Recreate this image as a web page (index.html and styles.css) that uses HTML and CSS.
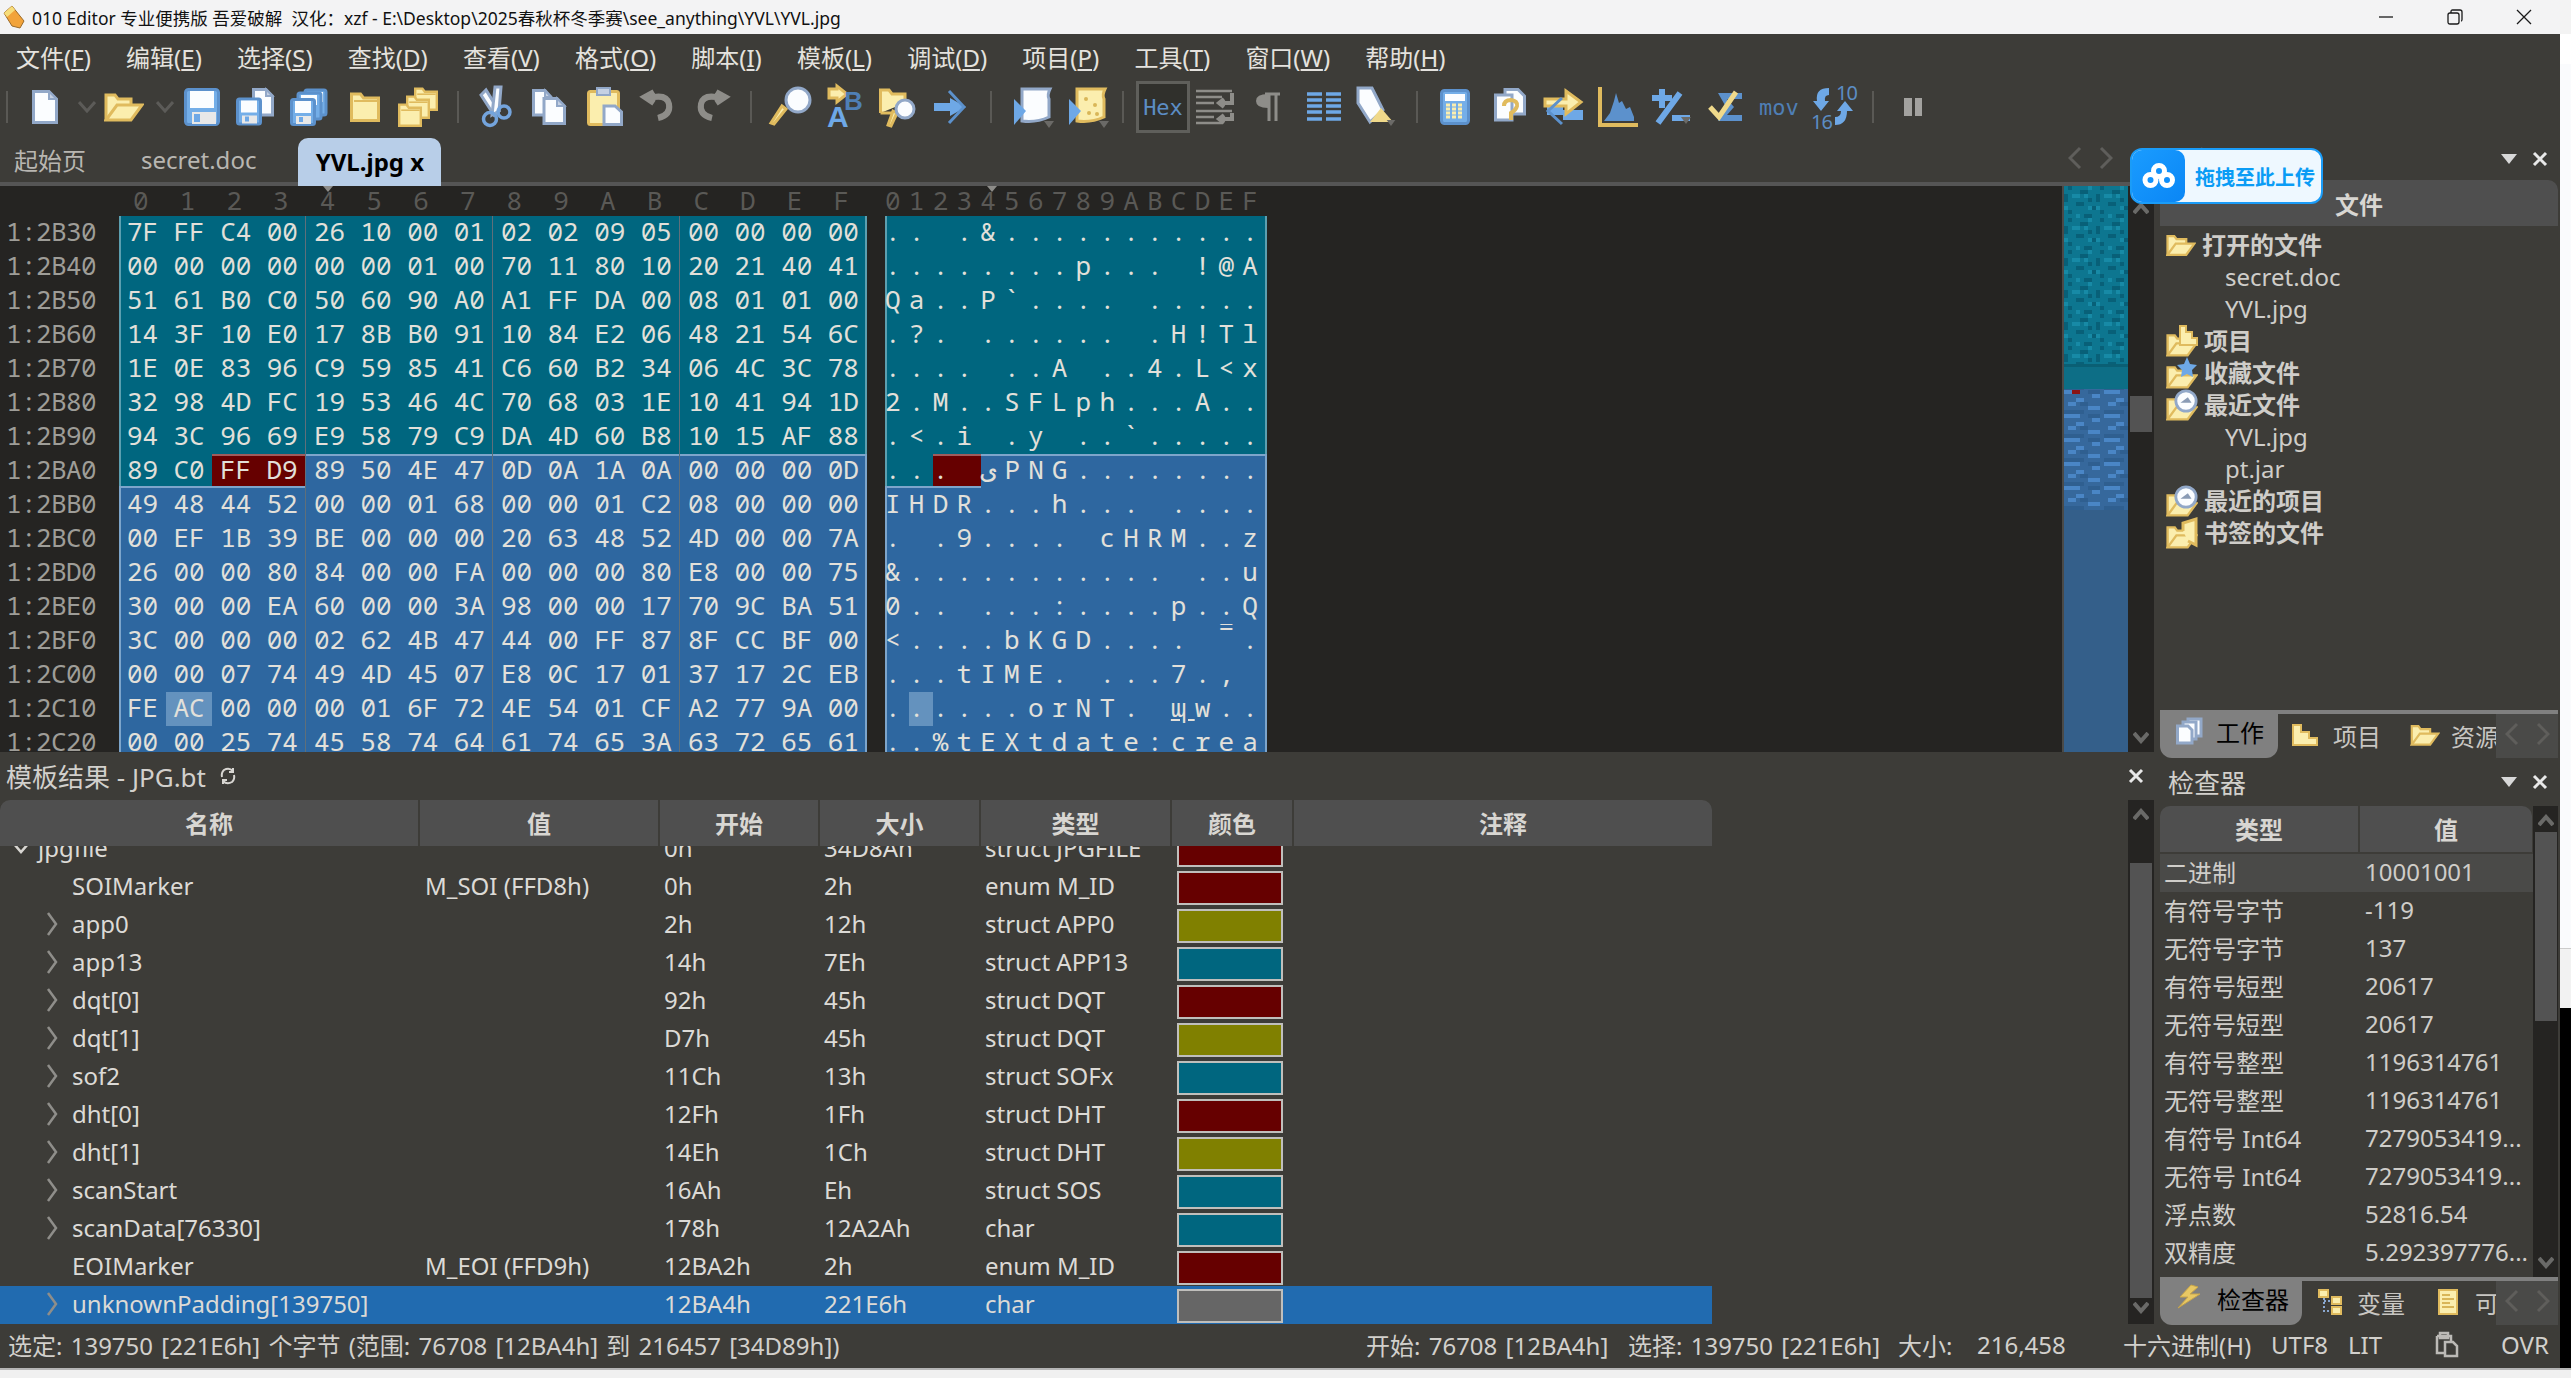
FILE: index.html
```html
<!DOCTYPE html>
<html lang="zh">
<head>
<meta charset="utf-8">
<title>010 Editor</title>
<link rel="stylesheet" href="styles.css">
</head>
<body>
<svg class="defs" aria-hidden="true">
  <symbol id="fo" viewBox="0 0 40 30"><path class="y" d="M2 28V3h9l3 4h13v6"/><path class="y" d="M2 28L13 13H38L27 28Z"/></symbol>
  <symbol id="fc" viewBox="0 0 30 30"><path class="y" d="M1.5 28.5V2h9l3 4h15v22.5Z"/><path class="yl" d="M4 9H27"/></symbol>
  <symbol id="fl" viewBox="0 0 26 28"><rect class="b" x="1.5" y="1.5" width="23" height="25" rx="2"/><rect class="wf" x="5" y="3" width="16" height="12"/><rect class="gf" x="6" y="18" width="15" height="8"/><rect class="bf" x="9" y="19" width="4" height="5"/></symbol>
  <symbol id="pg" viewBox="0 0 26 34"><path class="w" d="M1.5 1.5H17L24.5 9V32.5H1.5Z"/><path class="wd" d="M17 1.5V9H24.5Z"/></symbol>
  <symbol id="ch" viewBox="0 0 18 12"><path class="chv" d="M1 1L9 10L17 1"/></symbol>
  <symbol id="dd" viewBox="0 0 10 7"><path class="ddf" d="M0 0H10L5 7Z"/></symbol>
  <symbol id="ddw" viewBox="0 0 16 10"><path class="ddl" d="M0 0H16L8 10Z"/></symbol>
  <symbol id="clock" viewBox="0 0 26 26"><circle class="w" cx="13" cy="13" r="11"/><path class="cl" d="M7 15H19L15 9Z"/></symbol>
  <symbol id="x" viewBox="0 0 16 16"><path class="xs" d="M2 2L14 14M14 2L2 14"/></symbol>
  <symbol id="lf" viewBox="0 0 14 24"><path class="nav" d="M12 2L2 12L12 22"/></symbol>
  <symbol id="rg" viewBox="0 0 14 24"><path class="nav" d="M2 2L12 12L2 22"/></symbol>
  <symbol id="up" viewBox="0 0 16 12"><path class="scr" d="M1 11L8 3L15 11"/></symbol>
  <symbol id="dn" viewBox="0 0 16 12"><path class="scr" d="M1 1L8 9L15 1"/></symbol>
  <symbol id="ex" viewBox="0 0 12 26"><path class="arrs" d="M2 2L10 13L2 24"/></symbol>
  <pattern id="nt" width="32" height="32" patternUnits="userSpaceOnUse">
    <rect width="32" height="32" fill="#0d7690"/>
    <rect class="d1" x="4" y="0" width="4" height="4"/><rect class="d1" x="16" y="4" width="8" height="4"/><rect class="d1" x="0" y="8" width="4" height="8"/><rect class="d1" x="24" y="12" width="4" height="4"/><rect class="d1" x="12" y="16" width="8" height="4"/><rect class="d1" x="28" y="20" width="4" height="4"/><rect class="d1" x="4" y="24" width="4" height="4"/><rect class="d1" x="20" y="28" width="8" height="4"/>
    <rect class="l1" x="24" y="0" width="4" height="4"/><rect class="l1" x="8" y="8" width="8" height="4"/><rect class="l1" x="20" y="8" width="4" height="4"/><rect class="l1" x="0" y="20" width="4" height="4"/><rect class="l1" x="24" y="20" width="4" height="4"/><rect class="l1" x="12" y="28" width="4" height="4"/>
  </pattern>
  <pattern id="nb" width="40" height="24" patternUnits="userSpaceOnUse">
    <rect width="40" height="24" fill="#36689c"/>
    <rect class="l2" x="4" y="0" width="8" height="4"/><rect class="l2" x="24" y="4" width="12" height="4"/><rect class="l2" x="0" y="12" width="16" height="4"/><rect class="l2" x="28" y="16" width="8" height="4"/><rect class="l2" x="12" y="20" width="8" height="4"/>
    <rect class="d2" x="16" y="0" width="8" height="4"/><rect class="d2" x="0" y="8" width="20" height="4"/><rect class="d2" x="24" y="12" width="12" height="4"/>
  </pattern>
</svg>

<div class="top">
<div class="app">
  <header class="titlebar">
    <svg class="applogo" width="22" height="24" viewBox="0 0 22 24"><path class="lg1" d="M1 8L9 1L21 16L17 23L9 21Z"/><path class="lg2" d="M1 8L9 1L12 5L4 12Z"/></svg>
    <span class="ttl">010 Editor 专业便携版 吾爱破解&nbsp; 汉化：xzf - E:\Desktop\2025春秋杯冬季赛\see_anything\YVL\YVL.jpg</span>
    <div class="winbtns">
      <svg width="16" height="16" viewBox="0 0 16 16"><path class="wc" d="M1 8H15"/></svg>
      <svg width="16" height="16" viewBox="0 0 16 16"><path class="wc" d="M4 3.5V2.5Q4 1 5.5 1H13Q15 1 15 3V10.5Q15 12 14 12M1 6Q1 4 3 4H10Q12 4 12 6V13Q12 15 10 15H3Q1 15 1 13Z"/></svg>
      <svg width="16" height="16" viewBox="0 0 16 16"><path class="wc" d="M1 1L15 15M15 1L1 15"/></svg>
    </div>
  </header>

  <nav class="menu">
    <span>文件(<u>F</u>)</span><span>编辑(<u>E</u>)</span><span>选择(<u>S</u>)</span><span>查找(<u>D</u>)</span><span>查看(<u>V</u>)</span><span>格式(<u>O</u>)</span><span>脚本(<u>I</u>)</span><span>模板(<u>L</u>)</span><span>调试(<u>D</u>)</span><span>项目(<u>P</u>)</span><span>工具(<u>T</u>)</span><span>窗口(<u>W</u>)</span><span>帮助(<u>H</u>)</span>
  </nav>

  <div class="toolbar">
    <i class="sep"></i>
    <svg width="26" height="34"><use href="#pg"/></svg>
    <svg width="18" height="12"><use href="#ch"/></svg>
    <svg width="40" height="30"><use href="#fo"/></svg>
    <svg width="18" height="12"><use href="#ch"/></svg>
    <svg width="36" height="38" viewBox="0 0 36 38"><rect class="b" x="1.5" y="1.5" width="33" height="35" rx="3"/><rect class="wf" x="6" y="3" width="24" height="17"/><rect class="gf" x="8" y="24" width="24" height="12"/><rect class="bf" x="10" y="26" width="6" height="8"/></svg>
    <svg width="38" height="38" viewBox="0 0 38 38"><g transform="translate(16 0)"><path class="w" d="M1.5 1.5H14L20.5 8V27H1.5Z"/><path class="wd" d="M14 1.5V8H20.5Z"/></g><use href="#fl" y="9" width="26" height="29"/></svg>
    <svg width="38" height="38" viewBox="0 0 38 38"><rect class="b" x="15" y="2" width="21" height="25" rx="2"/><rect class="wf" x="18" y="4" width="15" height="10"/><rect class="b" x="8" y="5" width="23" height="26" rx="2"/><rect class="wf" x="11" y="7" width="16" height="10"/><use href="#fl" y="10" width="26" height="28"/></svg>
    <svg width="30" height="30"><use href="#fc"/></svg>
    <svg width="40" height="40" viewBox="0 0 40 40"><use href="#fc" x="16" y="0" width="24" height="24"/><use href="#fc" x="8" y="8" width="24" height="24"/><use href="#fc" x="0" y="16" width="24" height="24"/></svg>
    <i class="sep"></i>
    <svg width="32" height="40" viewBox="0 0 32 40"><path class="w" d="M1 8L6 3L19 24L14 28Z"/><path class="w" d="M15 0H21L19 24L12 28Z"/><circle class="ring" cx="10" cy="32" r="6.5"/><circle class="ring" cx="24" cy="25" r="6"/></svg>
    <svg width="34" height="36" viewBox="0 0 34 36"><path class="w" d="M1.5 1.5H13L19 8V26H1.5Z"/><path class="wd" d="M13 1.5V8H19Z"/><path class="w" d="M12 9.5H25L32.5 17V34.5H12Z"/><path class="wd" d="M25 9.5V17H32.5Z"/></svg>
    <svg width="36" height="38" viewBox="0 0 36 38"><rect class="y" x="1.5" y="3.5" width="30" height="33" rx="2"/><rect class="wd" x="10" y="0" width="13" height="7"/><path class="w" d="M17 18H28L34.5 24V36.5H17Z"/></svg>
    <svg width="36" height="32" viewBox="0 0 36 32"><path class="gs" d="M18 27Q31 24 29 13Q27 4 14 6H6M14 1L5 6L14 12"/></svg>
    <svg width="36" height="32" viewBox="0 0 36 32"><path class="gs" d="M18 27Q5 24 7 13Q9 4 22 6H30M22 1L31 6L22 12"/></svg>
    <i class="sep"></i>
    <svg width="42" height="40" viewBox="0 0 42 40"><path class="y" d="M16 22L4 37L1 36L12 19Z"/><ellipse class="w" cx="28" cy="13" rx="12" ry="12"/></svg>
    <svg width="38" height="42" viewBox="0 0 38 42"><path class="y" d="M2 3H10V0L20 8L10 16V12H2Z"/><text class="tbA2" x="17" y="24">B</text><text class="tbA" x="0" y="41">A</text></svg>
    <svg width="38" height="40" viewBox="0 0 38 40"><path class="y" d="M1.5 26V3H10L13 7H26V16"/><path class="y" d="M1.5 26H18"/><path class="y" d="M18 26L12 39L9 38L14 24Z"/><circle class="w" cx="26" cy="22" r="9"/></svg>
    <svg width="32" height="34" viewBox="0 0 32 34"><path class="bf" d="M0 13H16V8L32 17L16 26V21H0Z"/><path class="blues" d="M15 1L30 17L15 33"/></svg>
    <i class="sep"></i>
    <svg width="38" height="40" viewBox="0 0 38 40"><path class="w" d="M8 2H36Q33 8 35 12V30Q22 36 8 34Z"/><path class="bf" d="M0 12L12 24L0 38Z"/><use href="#dd" x="30" y="34" width="10" height="7"/></svg>
    <svg width="38" height="40" viewBox="0 0 38 40"><path class="y" d="M8 2H36Q33 8 35 12V30Q22 36 8 34Z"/><circle class="yd" cx="17" cy="12" r="2"/><circle class="yd" cx="26" cy="18" r="2"/><circle class="yd" cx="20" cy="26" r="2"/><circle class="yd" cx="28" cy="27" r="2"/><path class="bf" d="M0 12L12 24L0 38Z"/><use href="#dd" x="30" y="34" width="10" height="7"/></svg>
    <i class="sep"></i>
    <span class="hexbtn">Hex</span>
    <svg width="38" height="36" viewBox="0 0 38 36"><path class="gb" d="M0 2H36M0 8H26M0 14H18M0 22H36M0 28H18M0 34H26"/><path class="gs2" d="M36 4V14H24M28 10L23 14L28 18M36 24V30H24M28 26L23 30L28 34"/></svg>
    <svg width="26" height="28" viewBox="0 0 26 28"><path class="pil" d="M10 1H25M14 1V28M21 1V28"/><path class="pif" d="M13 1V15Q1 15 1 8Q1 1 13 1Z"/></svg>
    <svg width="34" height="30" viewBox="0 0 34 30"><path class="cols" d="M0 2H15M19 2H34M0 8H15M19 8H34M0 14H15M19 14H34M0 20H15M19 20H34M0 27H15M19 27H34"/></svg>
    <svg width="40" height="38" viewBox="0 0 40 38"><path class="w" d="M1 0L15 0L26 22L13 34L1 15Z"/><path class="yf" d="M24 20L36 34H13Z"/><use href="#dd" x="29" y="32" width="10" height="6"/></svg>
    <i class="sep"></i>
    <svg width="30" height="36" viewBox="0 0 30 36"><rect class="b" x="1.5" y="1.5" width="27" height="33" rx="3"/><rect class="wf" x="5" y="5" width="20" height="7"/><path class="cpad" d="M6 16H24M6 20H24M6 24H24M6 28H24" /></svg>
    <svg width="32" height="38" viewBox="0 0 32 38"><path class="w" d="M11 1.5H24L30.5 8V26H11Z"/><path class="w" d="M1.5 7H18V32H1.5Z"/><path class="qm" d="M10 18Q10 12 17 12Q24 13 23 18Q22 22 17 25V32"/></svg>
    <svg width="38" height="36" viewBox="0 0 38 36"><path class="bf" d="M38 21H18V16H2V26H18V31H38Z"/><path class="y" d="M0 10H21V2L36 13L21 25V17H0Z"/><path class="blues" d="M17 9L3 22L17 35"/></svg>
    <svg width="40" height="40" viewBox="0 0 40 40"><path class="yt" d="M2 0V38H40"/><path class="hist" d="M6 34L12 26L16 14L18 6L21 16L24 14L28 22L32 20L36 30V34Z"/></svg>
    <svg width="40" height="36" viewBox="0 0 40 36"><path class="bstroke" d="M0 9H20M10 0V19M28 4L6 34M20 29H38"/><use href="#dd" x="29" y="28" width="10" height="7"/></svg>
    <svg width="37" height="34" viewBox="0 0 37 34"><path class="blue5" d="M10 3H34V9L19 9L26 17L19 25H34V31H10L18 17Z"/><path class="check" d="M2 17L11 27L28 2"/></svg>
    <span class="movtx">mov</span>
    <div class="conv"><span class="c10">10</span><span class="c16">16</span><svg width="42" height="40" viewBox="0 0 42 40"><path class="bf" d="M16 1Q2 1 4 14H0L8 24L16 14H12Q11 8 16 8ZM22 38Q34 38 34 24H40L32 14L24 24H28Q28 30 22 30Z"/></svg></div>
    <i class="sep"></i>
    <div class="pause"><i></i><i></i></div>
  </div>

  <div class="dock">
    <div class="left">
      <div class="tabs">
        <span class="tab">起始页</span>
        <span class="tab tab2">secret.doc</span>
        <span class="tab on">YVL.jpg x</span>
        <div class="tabnav"><svg width="14" height="24"><use href="#lf"/></svg><svg width="14" height="24"><use href="#rg"/></svg></div>
      </div>
      <div class="hexpanel">
        <div class="hexmain">
          <div class="hexhead">
            <span class="hh1">0123456789ABCDEF</span><span class="hh2">0123456789ABCDEF</span>
            <i class="mk mk1"></i><i class="mk mk2"></i>
          </div>
          <div class="hl"><span class="ad">1:2B30</span><div class="hx t"><span class="g">7F FF C4 00</span><span class="g">26 10 00 01</span><span class="g">02 02 09 05</span><span class="g">00 00 00 00</span></div><div class="as t">.. .&amp;...........</div></div>
          <div class="hl"><span class="ad">1:2B40</span><div class="hx t"><span class="g">00 00 00 00</span><span class="g">00 00 01 00</span><span class="g">70 11 80 10</span><span class="g">20 21 40 41</span></div><div class="as t">........p... !@A</div></div>
          <div class="hl"><span class="ad">1:2B50</span><div class="hx t"><span class="g">51 61 B0 C0</span><span class="g">50 60 90 A0</span><span class="g">A1 FF DA 00</span><span class="g">08 01 01 00</span></div><div class="as t">Qa..P`.... .....</div></div>
          <div class="hl"><span class="ad">1:2B60</span><div class="hx t"><span class="g">14 3F 10 E0</span><span class="g">17 8B B0 91</span><span class="g">10 84 E2 06</span><span class="g">48 21 54 6C</span></div><div class="as t">.?. ...... .H!Tl</div></div>
          <div class="hl"><span class="ad">1:2B70</span><div class="hx t"><span class="g">1E 0E 83 96</span><span class="g">C9 59 85 41</span><span class="g">C6 60 B2 34</span><span class="g">06 4C 3C 78</span></div><div class="as t">.... ..A ..4.L&lt;x</div></div>
          <div class="hl"><span class="ad">1:2B80</span><div class="hx t"><span class="g">32 98 4D FC</span><span class="g">19 53 46 4C</span><span class="g">70 68 03 1E</span><span class="g">10 41 94 1D</span></div><div class="as t">2.M..SFLph...A..</div></div>
          <div class="hl"><span class="ad">1:2B90</span><div class="hx t"><span class="g">94 3C 96 69</span><span class="g">E9 58 79 C9</span><span class="g">DA 4D 60 B8</span><span class="g">10 15 AF 88</span></div><div class="as t">.&lt;.i .y ..`.....</div></div>
          <div class="hl"><span class="ad">1:2BA0</span><div class="hx b top-sel"><span class="g sp"><span class="cell t2 edge">89</span><span class="cell t2">C0</span><span class="cell r2">FF</span><span class="cell r2">D9</span></span><span class="g">89 50 4E 47</span><span class="g">0D 0A 1A 0A</span><span class="g">00 00 00 0D</span></div><div class="as b top-sel sp"><span class="ac t2 edge">.</span><span class="ac t2">.</span><span class="ac r2">.</span><span class="ac r2"> </span><span class="ac">ی</span><span class="rest">PNG........</span></div></div>
          <div class="hl"><span class="ad">1:2BB0</span><div class="hx b"><span class="g">49 48 44 52</span><span class="g">00 00 01 68</span><span class="g">00 00 01 C2</span><span class="g">08 00 00 00</span></div><div class="as b">IHDR...h... ....</div></div>
          <div class="hl"><span class="ad">1:2BC0</span><div class="hx b"><span class="g">00 EF 1B 39</span><span class="g">BE 00 00 00</span><span class="g">20 63 48 52</span><span class="g">4D 00 00 7A</span></div><div class="as b">. .9.... cHRM..z</div></div>
          <div class="hl"><span class="ad">1:2BD0</span><div class="hx b"><span class="g">26 00 00 80</span><span class="g">84 00 00 FA</span><span class="g">00 00 00 80</span><span class="g">E8 00 00 75</span></div><div class="as b">&amp;........... ..u</div></div>
          <div class="hl"><span class="ad">1:2BE0</span><div class="hx b"><span class="g">30 00 00 EA</span><span class="g">60 00 00 3A</span><span class="g">98 00 00 17</span><span class="g">70 9C BA 51</span></div><div class="as b">0.. ...:....p..Q</div></div>
          <div class="hl"><span class="ad">1:2BF0</span><div class="hx b"><span class="g">3C 00 00 00</span><span class="g">02 62 4B 47</span><span class="g">44 00 FF 87</span><span class="g">8F CC BF 00</span></div><div class="as b">&lt;....bKGD.... <span class="raise">=</span>.</div></div>
          <div class="hl"><span class="ad">1:2C00</span><div class="hx b"><span class="g">00 00 07 74</span><span class="g">49 4D 45 07</span><span class="g">E8 0C 17 01</span><span class="g">37 17 2C EB</span></div><div class="as b">...tIME. ...7., </div></div>
          <div class="hl"><span class="ad">1:2C10</span><div class="hx b"><span class="g sp"><span class="cell">FE</span><span class="cell hi">AC</span><span class="cell">00</span><span class="cell">00</span></span><span class="g">00 01 6F 72</span><span class="g">4E 54 01 CF</span><span class="g">A2 77 9A 00</span></div><div class="as b">.<span class="hi hia">.</span>....orNT. <u>ɰ</u>w..</div></div>
          <div class="hl"><span class="ad">1:2C20</span><div class="hx b"><span class="g">00 00 25 74</span><span class="g">45 58 74 64</span><span class="g">61 74 65 3A</span><span class="g">63 72 65 61</span></div><div class="as b">..%tEXtdate:crea</div></div>
        </div>
        <svg class="minimap" width="64" height="566" viewBox="0 0 64 566">
          <rect width="64" height="203" fill="url(#nt)"/>
          <rect y="178" width="64" height="3" class="mmd"/>
          <rect y="181" width="64" height="22" class="mmo"/>
          <rect y="203" width="64" height="121" fill="url(#nb)"/>
          <rect x="8" y="204" width="8" height="4" class="mmr"/>
          <rect y="324" width="64" height="242" class="mmp"/>
        </svg>
        <div class="vscroll hexscroll">
          <svg width="16" height="12"><use href="#up"/></svg>
          <i class="thumb"></i>
          <svg width="16" height="12"><use href="#dn"/></svg>
        </div>
      </div>

      <section class="tpl">
        <div class="ptitle"><span>模板结果 - JPG.bt</span><svg class="refresh" width="20" height="20" viewBox="0 0 20 20"><path class="rf" d="M15 5Q11 1 6 4Q3 7 4 11M5 15Q9 19 14 16Q17 13 16 9M15 2V6H11M5 18V14H9"/></svg><svg class="pclose" width="16" height="16"><use href="#x"/></svg></div>
        <div class="tplbody">
          <div class="table">
            <div class="thead"><span>名称</span><span>值</span><span>开始</span><span>大小</span><span>类型</span><span>颜色</span><span>注释</span></div>
            <div class="tbody">
              <div class="tr first"><span class="nm root"><svg class="dw" width="16" height="10" viewBox="0 0 16 10"><path class="dws" d="M1 1L8 9L15 1"/></svg>jpgfile</span><span></span><span>0h</span><span>34D8Ah</span><span>struct JPGFILE</span><span class="sw red"></span></div>
              <div class="tr"><span class="nm leaf">SOIMarker</span><span>M_SOI (FFD8h)</span><span>0h</span><span>2h</span><span>enum M_ID</span><span class="sw red"></span></div>
              <div class="tr"><span class="nm"><svg width="12" height="26"><use href="#ex"/></svg>app0</span><span></span><span>2h</span><span>12h</span><span>struct APP0</span><span class="sw olive"></span></div>
              <div class="tr"><span class="nm"><svg width="12" height="26"><use href="#ex"/></svg>app13</span><span></span><span>14h</span><span>7Eh</span><span>struct APP13</span><span class="sw teal"></span></div>
              <div class="tr"><span class="nm"><svg width="12" height="26"><use href="#ex"/></svg>dqt[0]</span><span></span><span>92h</span><span>45h</span><span>struct DQT</span><span class="sw red"></span></div>
              <div class="tr"><span class="nm"><svg width="12" height="26"><use href="#ex"/></svg>dqt[1]</span><span></span><span>D7h</span><span>45h</span><span>struct DQT</span><span class="sw olive"></span></div>
              <div class="tr"><span class="nm"><svg width="12" height="26"><use href="#ex"/></svg>sof2</span><span></span><span>11Ch</span><span>13h</span><span>struct SOFx</span><span class="sw teal"></span></div>
              <div class="tr"><span class="nm"><svg width="12" height="26"><use href="#ex"/></svg>dht[0]</span><span></span><span>12Fh</span><span>1Fh</span><span>struct DHT</span><span class="sw red"></span></div>
              <div class="tr"><span class="nm"><svg width="12" height="26"><use href="#ex"/></svg>dht[1]</span><span></span><span>14Eh</span><span>1Ch</span><span>struct DHT</span><span class="sw olive"></span></div>
              <div class="tr"><span class="nm"><svg width="12" height="26"><use href="#ex"/></svg>scanStart</span><span></span><span>16Ah</span><span>Eh</span><span>struct SOS</span><span class="sw teal"></span></div>
              <div class="tr"><span class="nm"><svg width="12" height="26"><use href="#ex"/></svg>scanData[76330]</span><span></span><span>178h</span><span>12A2Ah</span><span>char</span><span class="sw teal"></span></div>
              <div class="tr"><span class="nm leaf">EOIMarker</span><span>M_EOI (FFD9h)</span><span>12BA2h</span><span>2h</span><span>enum M_ID</span><span class="sw red"></span></div>
              <div class="tr sel"><span class="nm"><svg width="12" height="26"><use href="#ex"/></svg>unknownPadding[139750]</span><span></span><span>12BA4h</span><span>221E6h</span><span>char</span><span class="sw gray"></span></div>
            </div>
          </div>
          <div class="vscroll tplscroll">
            <svg width="16" height="12"><use href="#up"/></svg>
            <i class="thumb"></i>
            <svg width="16" height="12"><use href="#dn"/></svg>
          </div>
        </div>
      </section>
    </div>

    <div class="right">
      <section class="rtop">
        <div class="ptitle2"><span>工作</span><svg class="pm" width="16" height="10"><use href="#ddw"/></svg><svg width="16" height="16"><use href="#x"/></svg></div>
        <div class="filehead">文件</div>
        <div class="tree">
          <div class="node"><svg width="30" height="24"><use href="#fo"/></svg>打开的文件</div>
          <div class="kid">secret.doc</div>
          <div class="kid">YVL.jpg</div>
          <div class="node"><svg width="32" height="32" viewBox="0 0 32 32"><use href="#fo" y="8" width="32" height="24"/><path class="yb" d="M14 1H20V7H26V13H31V20H14Z"/></svg>项目</div>
          <div class="node"><svg width="32" height="32" viewBox="0 0 32 32"><use href="#fo" y="8" width="32" height="24"/><path class="star" d="M21 0L24 7L31 8L26 13L27 20L21 17L15 20L16 13L11 8L18 7Z"/></svg>收藏文件</div>
          <div class="node"><svg width="32" height="32" viewBox="0 0 32 32"><use href="#fo" y="8" width="32" height="24"/><use href="#clock" x="8" y="0" width="24" height="24"/></svg>最近文件</div>
          <div class="kid">YVL.jpg</div>
          <div class="kid">pt.jar</div>
          <div class="node"><svg width="32" height="32" viewBox="0 0 32 32"><use href="#fo" y="8" width="32" height="24"/><use href="#clock" x="8" y="0" width="24" height="24"/></svg>最近的项目</div>
          <div class="node"><svg width="32" height="32" viewBox="0 0 32 32"><use href="#fo" y="8" width="32" height="24"/><path class="y" d="M17 14V6L30 2V28L22 24"/></svg>书签的文件</div>
        </div>
        <div class="dtabs">
          <div class="dt on w1"><svg width="26" height="26" viewBox="0 0 26 26"><rect class="w" x="12" y="1" width="13" height="17"/><rect class="w" x="7" y="4" width="13" height="17"/><path class="w" d="M1.5 8H12L16 12V25H1.5Z"/></svg>工作</div>
          <div class="dt w2"><svg width="26" height="22" viewBox="0 0 26 22"><path class="yb" d="M1 1H9V8H17V14H25V21H1Z"/></svg>项目</div>
          <div class="dt w3"><svg width="30" height="22"><use href="#fo"/></svg>资源</div>
          <div class="dnav"><svg width="14" height="24"><use href="#lf"/></svg><svg width="14" height="24"><use href="#rg"/></svg></div>
        </div>
      </section>
      <section class="rbot">
        <div class="ptitle2 insp"><span>检查器</span><svg class="pm" width="16" height="10"><use href="#ddw"/></svg><svg width="16" height="16"><use href="#x"/></svg></div>
        <div class="inspbody">
          <div class="itable">
            <div class="ihead"><span>类型</span><span>值</span></div>
            <div class="ir cur"><span>二进制</span><span>10001001</span></div>
            <div class="ir"><span>有符号字节</span><span>-119</span></div>
            <div class="ir"><span>无符号字节</span><span>137</span></div>
            <div class="ir"><span>有符号短型</span><span>20617</span></div>
            <div class="ir"><span>无符号短型</span><span>20617</span></div>
            <div class="ir"><span>有符号整型</span><span>1196314761</span></div>
            <div class="ir"><span>无符号整型</span><span>1196314761</span></div>
            <div class="ir"><span>有符号 Int64</span><span>7279053419...</span></div>
            <div class="ir"><span>无符号 Int64</span><span>7279053419...</span></div>
            <div class="ir"><span>浮点数</span><span>52816.54</span></div>
            <div class="ir"><span>双精度</span><span>5.292397776...</span></div>
          </div>
          <div class="vscroll iscroll">
            <svg width="16" height="12"><use href="#up"/></svg>
            <i class="thumb"></i>
            <svg width="16" height="12"><use href="#dn"/></svg>
          </div>
        </div>
        <div class="dtabs">
          <div class="dt on w4"><svg width="26" height="28" viewBox="0 0 26 28"><path class="bolt" d="M15 1L4 13H12L2 24L24 10H14L22 3Z"/></svg>检查器</div>
          <div class="dt w5"><svg width="24" height="26" viewBox="0 0 24 26"><rect class="yb" x="1" y="1" width="9" height="7"/><rect class="yb" x="14" y="8" width="9" height="7"/><rect class="yb" x="14" y="18" width="9" height="7"/><path class="dots" d="M6 9V22H13M6 12H13"/></svg>变量</div>
          <div class="dt w6"><svg width="20" height="26" viewBox="0 0 20 26"><rect class="yb" x="1" y="1" width="18" height="24"/><path class="dots2" d="M4 6H12M4 10H16M4 14H12M4 18H16"/></svg>可</div>
          <div class="dnav"><svg width="14" height="24"><use href="#lf"/></svg><svg width="14" height="24"><use href="#rg"/></svg></div>
        </div>
      </section>
    </div>
  </div>

  <footer class="status">
    <span>选定: 139750 [221E6h] 个字节 (范围: 76708 [12BA4h] 到 216457 [34D89h])</span>
    <span>开始: 76708 [12BA4h]</span>
    <span>选择: 139750 [221E6h]</span>
    <span>大小:</span>
    <span>216,458</span>
    <span>十六进制(H)</span>
    <span>UTF8</span>
    <span>LIT</span>
    <svg width="24" height="26" viewBox="0 0 24 26"><path class="clip" d="M3 5H17V10M3 5V22H10M6 2H14V7H6ZM11 11H19L23 15V25H11Z"/></svg>
    <span>OVR</span>
  </footer>
</div>
<aside class="strip"><div class="s1"></div><div class="s2"></div><div class="s3"></div><div class="s4"></div><div class="s5"></div></aside>
</div>
<div class="bottom"></div>

<div class="baidu">
  <div class="bdlogo"><svg width="32" height="26" viewBox="0 0 32 26"><circle class="bdc" cx="16" cy="8" r="5.5"/><circle class="bdc" cx="7.5" cy="17" r="5.5"/><circle class="bdc" cx="24" cy="17" r="5.5"/></svg></div>
  <span>拖拽至此上传</span>
</div>
</body>
</html>
```
FILE: styles.css
```css
* { box-sizing: border-box; }
html, body { margin: 0; padding: 0; }
body {
  width: 2571px; height: 1378px; overflow: hidden; position: relative;
  background: #f1f1f1; color: #dcdad6;
  font-family: "Noto Sans", "Noto Sans CJK SC", sans-serif; font-size: 24px;
}
.defs { position: absolute; width: 0; height: 0; }
svg { display: block; flex: none; overflow: visible; }

/* icon paints */
.y { fill: #fbeeae; stroke: #e0bb5e; stroke-width: 3; }
.yl { fill: none; stroke: #e0bb5e; stroke-width: 2; }
.yb { fill: #fbeeae; stroke: #e0bb5e; stroke-width: 2; }
.yf { fill: #f0d98a; }
.yd { fill: #d9b658; }
.yt { fill: none; stroke: #e0bb5e; stroke-width: 4; }
.b { fill: #74aee8; stroke: #5c91cc; stroke-width: 3; }
.bf { fill: #6ea8e6; }
.wf { fill: #fbfdff; }
.gf { fill: #e8e8e8; }
.w { fill: #fbfdff; stroke: #92a8c8; stroke-width: 3; }
.wd { fill: #c5d1e3; stroke: #92a8c8; stroke-width: 2; }
.chv { fill: none; stroke: #5c5b58; stroke-width: 3; }
.ddf { fill: #6b6a67; }
.ddl { fill: #d8d8d8; }
.dws { fill: none; stroke: #d8d6d2; stroke-width: 2.5; }
.ring { fill: none; stroke: #74a4dc; stroke-width: 3.5; }
.gs { fill: none; stroke: #8e8d89; stroke-width: 6; }
.gb { fill: none; stroke: #8e8d89; stroke-width: 2.5; }
.gs2 { fill: none; stroke: #8e8d89; stroke-width: 4; }
.pil { fill: none; stroke: #8e8d89; stroke-width: 3; }
.pif { fill: #8e8d89; }
.cols { fill: none; stroke: #6ea8e6; stroke-width: 3.5; }
.cpad { fill: none; stroke: #fbeeae; stroke-width: 3; stroke-dasharray: 4 2; }
.qm { fill: none; stroke: #e0bb5e; stroke-width: 4; }
.blues { fill: none; stroke: #5c91cc; stroke-width: 3; }
.hist { fill: #5c91cc; }
.bstroke { fill: none; stroke: #6ea8e6; stroke-width: 6; }
.blue5 { fill: #5c91cc; }
.check { fill: none; stroke: #f0d98a; stroke-width: 5; }
.tbA { fill: #6ea8e6; font: bold 30px "Liberation Sans", sans-serif; }
.tbA2 { fill: #4f7fb5; font: bold 26px "Liberation Sans", sans-serif; }
.cl { fill: #8a9bb5; }
.xs { fill: none; stroke: #e8e8e8; stroke-width: 3; }
.nav { fill: none; stroke: #5f5e5b; stroke-width: 3; }
.scr { fill: none; stroke: #6a6a68; stroke-width: 4; }
.arrs { fill: none; stroke: #8f8e8a; stroke-width: 2.5; }
.star { fill: #6ea8e6; }
.bolt { fill: #e8c864; stroke: #c9a64a; stroke-width: 1; }
.dots { fill: none; stroke: #8aa8d0; stroke-width: 2; stroke-dasharray: 2 2; }
.dots2 { fill: none; stroke: #d9b658; stroke-width: 2; }
.clip { fill: none; stroke: #bcbab6; stroke-width: 2.5; }
.rf { fill: none; stroke: #d8d6d2; stroke-width: 2; }
.lg1 { fill: #f2a33a; stroke: #9a6a2a; stroke-width: 1; }
.lg2 { fill: #f7dd7a; }
.wc { fill: none; stroke: #1a1a1a; stroke-width: 1.3; }
.d1 { fill: #086078; }
.l1 { fill: #178aa6; }
.l2 { fill: #4a86c6; }
.d2 { fill: #2f5f90; }
.mmd { fill: #0a5f74; }
.mmo { fill: #0d6e86; }
.mmr { fill: #8a1414; }
.mmp { fill: #345f8a; }
.bdc { fill: none; stroke: #fff; stroke-width: 5; }

/* frame */
.top { display: flex; height: 1368px; }
.app { width: 2560px; height: 1368px; display: flex; flex-direction: column; background: #3d3c38; }
.strip { width: 11px; display: flex; flex-direction: column; }
.s1 { height: 34px; background: #f3f3f3; }
.s2 { height: 30px; background: #fff; }
.s3 { height: 884px; background: #fafbfd; }
.s4 { height: 60px; background: #f2f2f2; border-top: 1px solid #ccc; }
.s5 { flex: 1; background: #000; }
.bottom { height: 10px; background: #f0f0f0; border-top: 2px solid #b5b5b5; }

.titlebar { height: 34px; flex: none; background: #f3f3f4; color: #111; display: flex; align-items: center; padding-left: 3px; font-size: 17.5px; }
.applogo { margin-right: 7px; }
.ttl { white-space: nowrap; }
.winbtns { margin-left: auto; display: flex; gap: 53px; padding-right: 28px; }

.menu { height: 42px; flex: none; display: flex; align-items: center; gap: 35.2px; padding: 2px 0 0 16px; color: #e4e2de; white-space: nowrap; }
.toolbar {
  height: 62px; flex: none; display: grid; align-items: center; padding-left: 6px;
  grid-template-columns: 26px 46px 26px 52px 28px 52px 54px 60px 48px 59px 23px 52px 55px 53px 54px 56px 20px 57px 52px 55px 56px 24px 55px 53px 14px 60px 59px 52px 50px 59px 24px 54px 51px 53px 54px 56px 51px 54px 59px 32px 18px;
}
.sep { display: block; width: 2px; height: 32px; background: #5a5955; }
.hexbtn { width: 54px; height: 52px; display: flex; align-items: center; justify-content: center; background: #30302c; border: 3px solid #5f5f5b; color: #5c8dc4; font-size: 22px; font-family: "DejaVu Sans Mono", monospace; letter-spacing: 0; }
.movtx { color: #4f7fb5; font: 22px "DejaVu Sans Mono", monospace; }
.conv { position: relative; width: 42px; height: 40px; color: #5c8dc4; font-size: 20px; line-height: 20px; }
.c10 { position: absolute; right: -2px; top: -4px; letter-spacing: -1px; }
.c16 { position: absolute; left: -2px; bottom: -5px; letter-spacing: -1px; }
.pause { display: flex; gap: 3px; }
.pause i { display: block; width: 8px; height: 18px; background: #a3a29f; }

.dock { flex: 1; display: flex; min-height: 0; }
.left { width: 2154px; display: flex; flex-direction: column; }

/* tabs */
.tabs { height: 48px; flex: none; display: flex; align-items: stretch; border-bottom: 4px solid #555; padding-left: 14px; color: #b8b6b1; }
.tab { display: flex; align-items: center; padding-bottom: 2px; white-space: nowrap; }
.tab2 { margin-left: 55px; }
.tab.on { margin: 0 0 -4px 42px; width: 143px; justify-content: center; background: #b8cee8; color: #000; font-weight: 700; border-radius: 10px 10px 0 0; }
.tabnav { margin-left: auto; width: 86px; display: flex; gap: 17px; align-items: center; padding-bottom: 4px; }

/* hex */
.hexpanel { height: 566px; flex: none; display: flex; }
.hexmain { width: 2064px; background: #252422; border-right: 2px solid #4a4a48; overflow: hidden; font: 26px/30px "Noto Sans Mono", "DejaVu Sans Mono", monospace; color: #e2e0da; }
.hexhead { height: 30px; position: relative; color: #5a5956; white-space: pre; line-height: 28px; }
.hh1 { position: absolute; top: 0; left: 133px; letter-spacing: 31.1px; }
.hh2 { position: absolute; top: 0; left: 885px; letter-spacing: 8.22px; }
.mk { position: absolute; top: 0; border: 5px solid transparent; border-top: 6px solid #8d8c89; border-bottom: 0; }
.mk1 { left: 323px; }
.mk2 { left: 987px; }
.hl { height: 34px; display: grid; grid-template-columns: 119px 748px 18px 382px; white-space: pre; }
.ad { padding-left: 6px; color: #9e9d98; letter-spacing: -0.6px; }
.hx, .as { height: 34px; }
.hx { display: flex; letter-spacing: -0.07px; }
.hx.t, .as.t { background: #00667f; box-shadow: inset 2px 0 0 #5c9fb0, inset -2px 0 0 #5c9fb0; }
.hx.b, .as.b { background: #2e67a0; box-shadow: inset 2px 0 0 #7da5cb, inset -2px 0 0 #7da5cb; }
.hx.top-sel, .as.top-sel { box-shadow: inset 2px 0 0 #7da5cb, inset -2px 0 0 #7da5cb, inset 0 2px 0 #7da5cb; }
.g { width: 187px; padding-left: 8px; border-right: 1px solid #5f6f7a; flex: none; }
.g:last-child { border-right: 0; }
.g.sp { display: flex; padding-left: 0; }
.cell { width: 46.75px; padding-left: 8px; }
.t2 { background: #00667f; box-shadow: inset 0 -2px 0 #7da5cb; }
.edge { box-shadow: inset 0 -2px 0 #7da5cb, inset 2px 0 0 #5c9fb0; }
.r2 { background: #660000; box-shadow: inset 0 2px 0 #a05c5c, inset 0 -2px 0 #7da5cb; }
.hi { background: #6492be; }
.hia { display: inline-block; height: 34px; }
.as { grid-column: 4; letter-spacing: 8.22px; overflow: hidden; }
.as.sp { display: flex; }
.ac { width: 23.875px; flex: none; }
.rest { flex: none; }
.raise { position: relative; top: -13px; }

.minimap { width: 64px; height: 566px; }
.vscroll { background: #252422; display: flex; flex-direction: column; align-items: center; justify-content: space-between; }
.hexscroll { width: 26px; padding: 16px 0 8px; }
.thumb { display: block; width: 22px; background: #535353; }
.hexscroll .thumb { height: 36px; margin-top: 172px; margin-bottom: 291px; }

/* template */
.tpl { flex: 1; display: flex; flex-direction: column; min-height: 0; }
.ptitle { height: 48px; flex: none; display: flex; align-items: center; padding-left: 6px; color: #d2d0cc; font-size: 26px; }
.refresh { margin-left: 12px; }
.pclose { margin-left: auto; margin-right: 10px; }
.tplbody { flex: 1; display: flex; min-height: 0; }
.table { width: 2128px; display: flex; flex-direction: column; }
.thead, .tr { width: 1712px; display: grid; grid-template-columns: 420px 240px 160px 161px 191px 122px 418px; }
.thead { height: 46px; flex: none; font-weight: 700; background: #3d3c38; border-radius: 10px 10px 0 0; overflow: hidden; color: #d8d6d2; }
.thead span { display: flex; align-items: center; justify-content: center; background: #4f4f4f; margin-right: 2px; padding-bottom: 2px; }
.thead span:last-child { margin-right: 0; }
.tbody { height: 478px; overflow: hidden; }
.tr { height: 38px; line-height: 36px; align-items: center; white-space: nowrap; }
.tr > span:not(.sw) { margin-bottom: 3px; }
.tr.first { margin-top: -16px; }
.tr > span:nth-child(2) { padding-left: 5px; }
.tr > span:nth-child(3), .tr > span:nth-child(4), .tr > span:nth-child(5) { padding-left: 4px; }
.nm { display: flex; align-items: center; padding-left: 46px; gap: 14px; }
.nm.leaf { padding-left: 72px; }
.nm.root { padding-left: 13px; gap: 9px; }
.tr.sel { background: #216bb0; }
.sw { width: 106px; height: 34px; margin-left: 5px; border: 2px solid #c0bfbc; }
.red { background: #660000; }
.olive { background: #808000; }
.teal { background: #00667f; }
.gray { background: #666; }
.tplscroll { width: 26px; padding: 8px 0 10px; }
.tplscroll .thumb { flex: 1; margin: 43px 0 4px; }

/* right */
.right { width: 406px; display: flex; flex-direction: column; padding: 0 2px 0 6px; }
.rtop { height: 620px; flex: none; display: flex; flex-direction: column; }
.rbot { flex: 1; display: flex; flex-direction: column; min-height: 0; }
.ptitle2 { height: 42px; flex: none; display: flex; align-items: center; padding: 0 10px 0 8px; color: #d2d0cc; font-size: 26px; }
.ptitle2 .pm { margin-left: auto; margin-right: 15px; }
.insp { height: 48px; padding-top: 0; }
.filehead { height: 46px; flex: none; display: flex; align-items: center; justify-content: center; background: #4f4f4f; border-radius: 10px 10px 0 0; font-weight: 700; color: #d8d6d2; }
.tree { flex: 1; padding: 3px 0 0 6px; line-height: 32px; min-height: 0; color: #cfcdc9; }
.node { height: 32px; display: flex; align-items: center; gap: 6px; font-weight: 700; }
.kid { height: 32px; padding-left: 59px; }
.dtabs { height: 48px; flex: none; display: flex; align-items: stretch; border-top: 4px solid #808080; margin-right: 0; position: relative; color: #c8c6c2; white-space: nowrap; overflow: hidden; }
.dt { display: flex; align-items: center; flex: none; gap: 15px; padding-bottom: 2px; }
.dt.on { margin-top: -4px; height: 48px; background: #808080; color: #000; border-radius: 0 0 12px 12px; padding-bottom: 6px; }
.w1 { width: 118px; padding-left: 16px; gap: 14px; }
.w2 { width: 122px; padding-left: 14px; }
.w3 { width: 96px; padding-left: 10px; gap: 11px; overflow: hidden; }
.w4 { width: 142px; padding-left: 16px; }
.w5 { width: 124px; padding-left: 16px; }
.w6 { width: 70px; padding-left: 12px; gap: 17px; overflow: hidden; }
.dnav { position: absolute; right: 0; top: -4px; bottom: 0; width: 62px; background: #4a4a48; display: flex; align-items: center; justify-content: center; gap: 17px; }
.inspbody { height: 471px; flex: none; display: flex; }
.itable { width: 373px; }
.ihead { height: 46px; display: grid; grid-template-columns: 200px 172px; font-weight: 700; margin-bottom: 2px; color: #d8d6d2; }
.ihead span { display: flex; align-items: center; justify-content: center; background: #4f4f4f; padding-bottom: 2px; }
.ihead span:first-child { border-radius: 10px 0 0 0; margin-right: 2px; }
.ihead span:last-child { border-radius: 0 10px 0 0; }
.ir { height: 38px; display: grid; grid-template-columns: 205px 1fr; align-items: center; white-space: nowrap; color: #cfcdc9; padding-bottom: 3px; }
.ir span:first-child { padding-left: 4px; }
.ir.cur { background: #4a4a48; }
.iscroll { width: 25px; padding: 8px 0 8px; }
.iscroll .thumb { height: 189px; margin: 6px 0 auto; }

/* status */
.status {
  height: 44px; flex: none; display: grid; align-items: center; padding: 0 0 4px 8px; white-space: nowrap; color: #d2d0cc; word-spacing: 2px;
  grid-template-columns: 1358px 262px 270px 79px 146px 148px 77px 86px 67px auto;
}

/* overlay */
.baidu { position: absolute; left: 2130px; top: 148px; width: 193px; height: 56px; display: flex; align-items: center; background: #eef8ff; border: 2px solid #1a9cf8; border-radius: 12px; overflow: hidden; color: #0a9cf5; font-size: 20px; font-weight: 700; white-space: nowrap; }
.bdlogo { width: 53px; height: 100%; display: flex; align-items: center; justify-content: center; background: linear-gradient(135deg, #1a9cff, #0a86f5); margin-right: 10px; border-radius: 0 10px 10px 0; }
```
